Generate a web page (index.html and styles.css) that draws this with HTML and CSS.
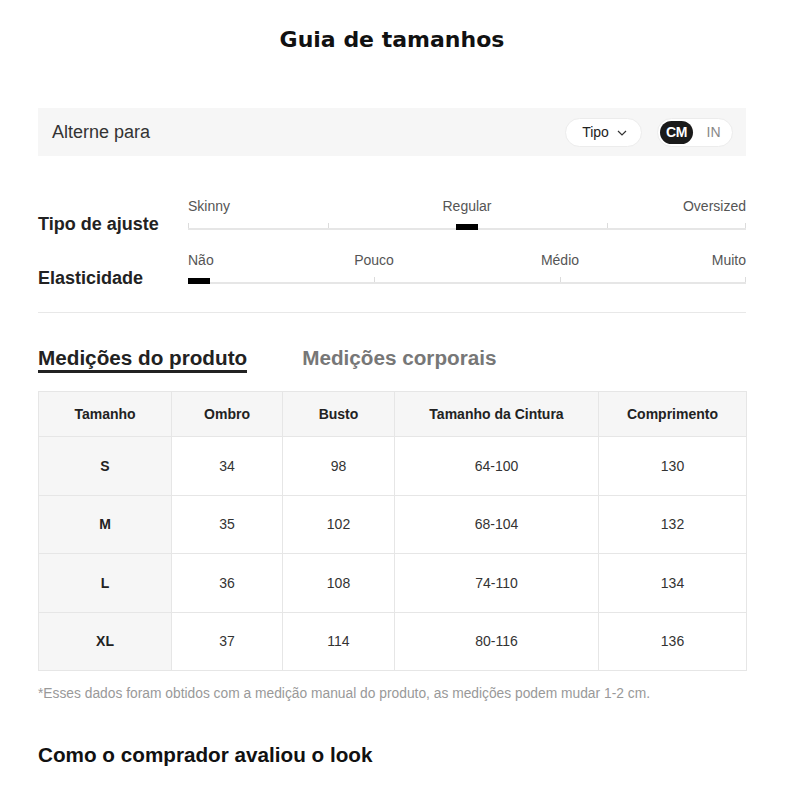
FILE: index.html
```html
<!DOCTYPE html>
<html lang="pt">
<head>
<meta charset="utf-8">
<title>Guia de tamanhos</title>
<link rel="stylesheet" href="styles.css">
</head>
<body>
<div class="page">
  <h1 class="title">Guia de tamanhos</h1>

  <div class="switch-bar">
    <span class="switch-label">Alterne para</span>
    <div class="switch-controls">
      <button class="type-pill">Tipo
        <svg class="chev" width="10" height="6" viewBox="0 0 10 6"><path d="M1 1l4 4 4-4" fill="none" stroke="#333" stroke-width="1.2"/></svg>
      </button>
      <div class="unit-toggle">
        <span class="unit active">CM</span>
        <span class="unit">IN</span>
      </div>
    </div>
  </div>

  <div class="fit">
    <div class="fit-row">
      <div class="fit-label">Tipo de ajuste</div>
      <div class="scale">
        <div class="scale-labels four">
          <span class="l-start">Skinny</span><span class="l-mid">Regular</span><span class="l-end">Oversized</span>
        </div>
        <div class="track">
          <i class="tick" style="left:0%"></i>
          <i class="tick" style="left:25%"></i>
          <i class="tick" style="left:75%"></i>
          <i class="tick" style="left:calc(100% - 1px)"></i>
          <b class="marker" style="left:calc(50% - 11px)"></b>
        </div>
      </div>
    </div>
    <div class="fit-row second">
      <div class="fit-label">Elasticidade</div>
      <div class="scale">
        <div class="scale-labels six">
          <span class="l-start">Não</span><span class="l-a">Pouco</span><span class="l-b">Médio</span><span class="l-end">Muito</span>
        </div>
        <div class="track">
          <i class="tick" style="left:33.33%"></i>
          <i class="tick" style="left:66.66%"></i>
          <i class="tick" style="left:calc(100% - 1px)"></i>
          <b class="marker" style="left:0"></b>
        </div>
      </div>
    </div>
  </div>

  <div class="tabs">
    <span class="tab active">Medições do produto</span>
    <span class="tab">Medições corporais</span>
  </div>

  <table class="sizes">
    <colgroup>
      <col class="c1"><col class="c2"><col class="c3"><col class="c4"><col class="c5">
    </colgroup>
    <thead>
      <tr><th>Tamanho</th><th>Ombro</th><th>Busto</th><th>Tamanho da Cintura</th><th>Comprimento</th></tr>
    </thead>
    <tbody>
      <tr><th>S</th><td>34</td><td>98</td><td>64-100</td><td>130</td></tr>
      <tr><th>M</th><td>35</td><td>102</td><td>68-104</td><td>132</td></tr>
      <tr><th>L</th><td>36</td><td>108</td><td>74-110</td><td>134</td></tr>
      <tr><th>XL</th><td>37</td><td>114</td><td>80-116</td><td>136</td></tr>
    </tbody>
  </table>

  <p class="note">*Esses dados foram obtidos com a medição manual do produto, as medições podem mudar 1-2 cm.</p>

  <h2 class="section">Como o comprador avaliou o look</h2>
</div>
</body>
</html>
```
FILE: styles.css
```css
* { box-sizing: border-box; }
body {
  margin: 0;
  background: #fff;
  font-family: "Liberation Sans", Arial, sans-serif;
  color: #222;
}
.page {
  padding: 0 54px 0 38px;
}
.title {
  margin: 0 0 54px;
  padding-top: 26px;
  line-height: 28px;
  font-family: "DejaVu Sans", sans-serif;
  font-weight: bold;
  font-size: 22px;
  text-align: center;
  color: #111;
}
.switch-bar {
  height: 48px;
  background: #f6f6f6;
  display: flex;
  align-items: center;
  justify-content: space-between;
  padding: 0 13px 0 14px;
}
.switch-label {
  font-size: 18px;
  color: #333;
}
.switch-controls {
  display: flex;
  align-items: center;
  gap: 15px;
}
.type-pill {
  width: 77px;
  height: 29px;
  border: 1px solid #ececec;
  border-radius: 15px;
  background: #fff;
  font-family: "Liberation Sans", Arial, sans-serif;
  font-size: 14px;
  color: #222;
  display: flex;
  align-items: center;
  justify-content: center;
  gap: 8px;
  padding: 0 0 0 2px;
}
.chev { display: block; margin-top: 1px; }
.unit-toggle {
  width: 76px;
  height: 29px;
  border: 1px solid #ececec;
  border-radius: 15px;
  background: #fff;
  display: flex;
  align-items: center;
  padding: 0 2px;
}
.unit {
  width: 35px;
  height: 23px;
  border-radius: 12px;
  display: flex;
  align-items: center;
  justify-content: center;
  font-size: 14px;
  color: #888;
}
.unit.active {
  background: #1a1a1a;
  color: #fff;
  font-weight: bold;
  letter-spacing: -0.5px;
}
.unit + .unit { margin-left: 4px; }

.fit {
  padding-top: 42px;
  padding-bottom: 24px;
  border-bottom: 1px solid #e8e8e8;
}
.fit-row {
  display: flex;
}
.fit-row.second { margin-top: 18px; }
.fit-label {
  width: 150px;
  padding-top: 16px;
  font-size: 18px;
  line-height: 20px;
  font-weight: bold;
  color: #222;
}
.scale { flex: 1; }
.scale-labels {
  display: grid;
  font-size: 14px;
  line-height: 16px;
  color: #555;
  white-space: nowrap;
}
.scale-labels.four { grid-template-columns: repeat(4, 1fr); }
.scale-labels.six { grid-template-columns: repeat(6, 1fr); }
.l-start { justify-self: start; }
.l-end { justify-self: end; grid-column: -2 / -1; }
.four .l-mid { grid-column: 2 / 4; justify-self: center; }
.six .l-a { grid-column: 2 / 4; justify-self: center; }
.six .l-b { grid-column: 4 / 6; justify-self: center; }
.track {
  position: relative;
  height: 16px;
  border-bottom: 2px solid #e6e6e6;
}
.tick {
  position: absolute;
  bottom: 0;
  width: 1px;
  height: 5px;
  background: #dcdcdc;
}
.marker {
  position: absolute;
  bottom: -2px;
  width: 22px;
  height: 6px;
  background: #000;
}

.tabs {
  display: flex;
  gap: 55px;
  margin-top: 33px;
}
.tab {
  font-size: 20.7px;
  font-weight: bold;
  line-height: 24px;
  color: #777;
}
.tab.active {
  color: #222;
  border-bottom: 3px solid #222;
}

.sizes {
  margin-top: 18px;
  width: 100%;
  border-collapse: collapse;
  table-layout: fixed;
  font-size: 14px;
}
.c1 { width: 133px; }
.c2 { width: 111px; }
.c3 { width: 112px; }
.c4 { width: 204px; }
.c5 { width: 148px; }
.sizes th, .sizes td {
  border: 1px solid #e6e6e6;
  text-align: center;
  padding: 0;
}
.sizes thead th {
  height: 45px;
  background: #f6f6f6;
  font-weight: bold;
  color: #222;
}
.sizes tbody tr { height: 58.5px; }
.sizes tbody th {
  background: #f6f6f6;
  font-weight: bold;
  color: #222;
}
.sizes td { color: #333; }

.note {
  margin: 15px 0 0;
  font-size: 13.8px;
  line-height: 16px;
  color: #999;
}
.section {
  margin: 41px 0 0;
  font-size: 20.7px;
  line-height: 24px;
  font-weight: bold;
  color: #111;
}
```
